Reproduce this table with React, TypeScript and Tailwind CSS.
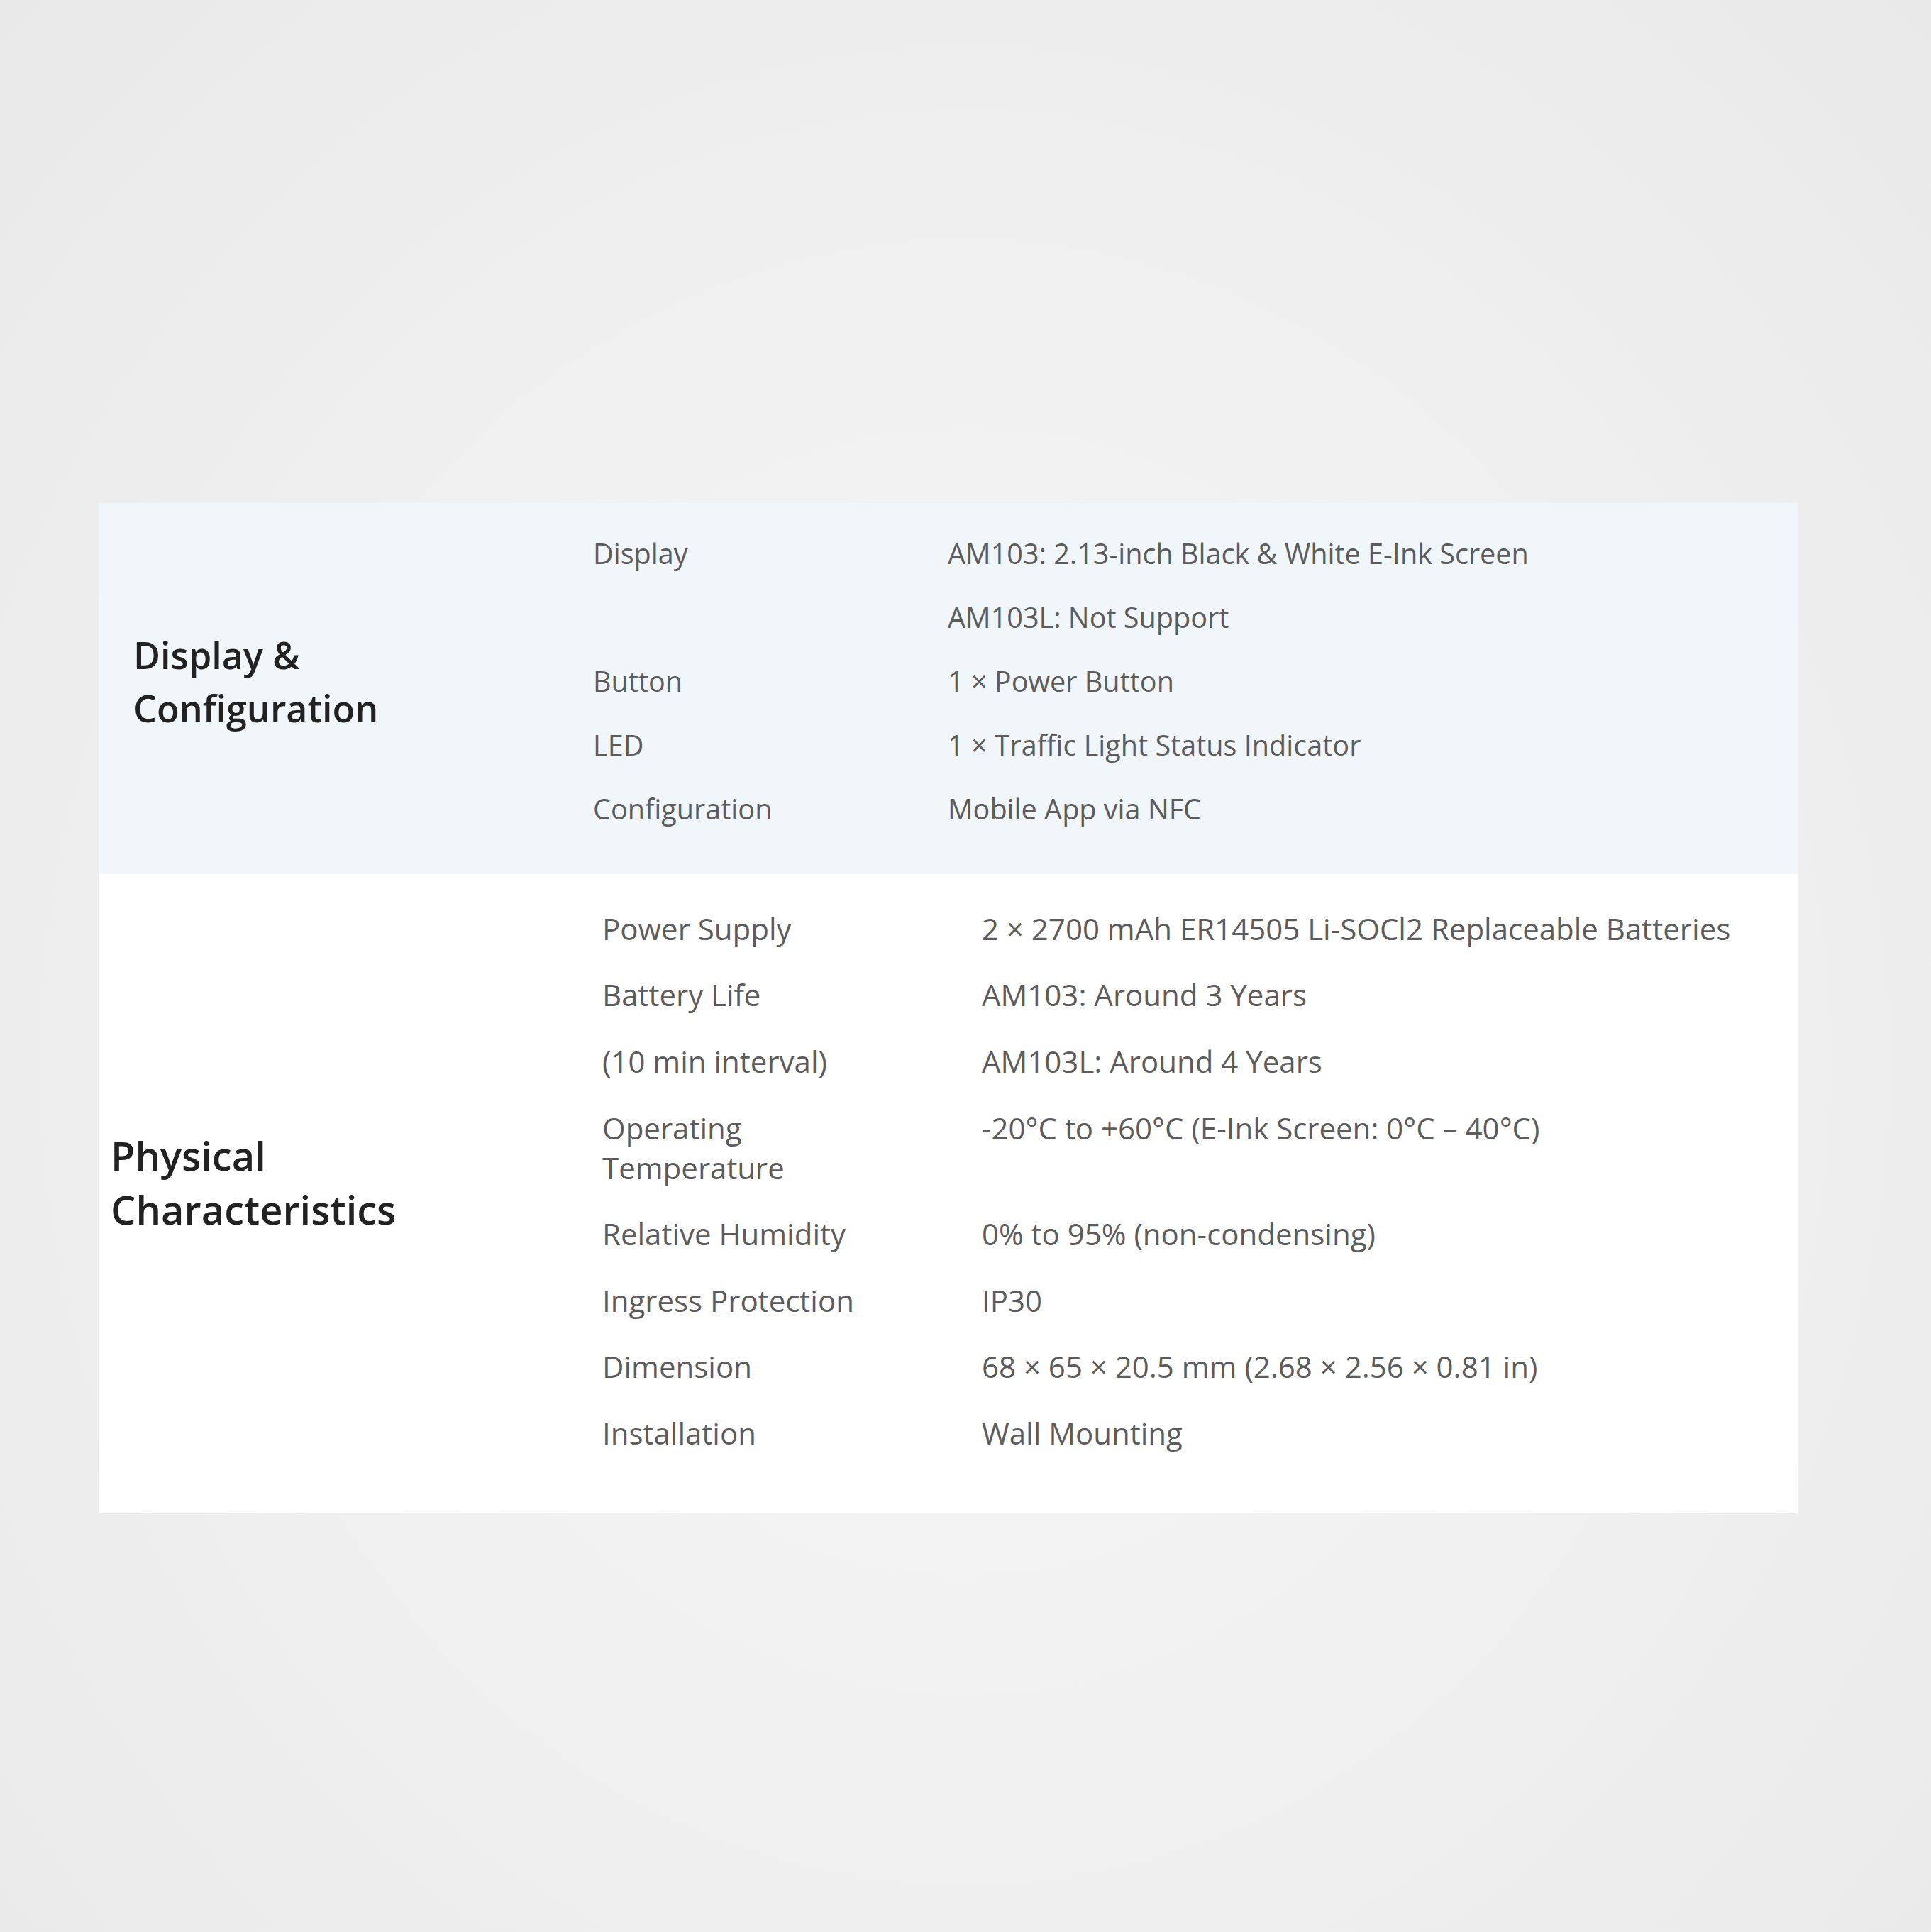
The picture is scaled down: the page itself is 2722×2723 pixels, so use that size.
const displayRows = [
  { label: 'Display', value: 'AM103: 2.13-inch Black & White E-Ink Screen' },
  { label: '', value: 'AM103L: Not Support' },
  { label: 'Button', value: '1 × Power Button' },
  { label: 'LED', value: '1 × Traffic Light Status Indicator' },
  { label: 'Configuration', value: 'Mobile App via NFC' },
];

const physicalRows = [
  { label: 'Power Supply', value: '2 × 2700 mAh ER14505 Li-SOCl2 Replaceable Batteries' },
  { label: 'Battery Life', value: 'AM103: Around 3 Years' },
  { label: '(10 min interval)', value: 'AM103L: Around 4 Years' },
  { label: 'Operating Temperature', value: '-20°C to +60°C (E-Ink Screen: 0°C – 40°C)' },
  { label: 'Relative Humidity', value: '0% to 95% (non-condensing)' },
  { label: 'Ingress Protection', value: 'IP30' },
  { label: 'Dimension', value: '68 × 65 × 20.5 mm (2.68 × 2.56 × 0.81 in)' },
  { label: 'Installation', value: 'Wall Mounting' },
];

export default function App() {
  return (
    <div
      className="w-[2722px] h-[2723px] pt-[709px] pl-[139px] bg-[radial-gradient(ellipse_at_50%_55%,#f8f8f8_0%,#f1f1f1_45%,#e9e9ea_100%)]"
      style={{ fontFamily: '"Open Sans", "Noto Sans", sans-serif' }}
    >
      <div className="w-[2395px]">
        {/* Display & Configuration */}
        <section className="flex h-[523px] bg-[#f1f6fa] pt-[26px] pb-[48px]">
          <div className="w-[697px] pl-[49px] flex items-center">
            <h2 className="text-[52px] leading-[75px] font-semibold text-[#222222]">
              Display &amp;
              <br />
              Configuration
            </h2>
          </div>
          <div className="flex-1 flex flex-col">
            {displayRows.map((row, i) => (
              <div key={i} className="flex py-[17px] text-[39.6px] leading-[56px] text-[#5c5c5c]">
                <div className="w-[500px] shrink-0">{row.label}</div>
                <div>{row.value}</div>
              </div>
            ))}
          </div>
        </section>

        {/* Physical Characteristics */}
        <section className="flex h-[901px] bg-white pt-[30px] pb-[62px]">
          <div className="w-[710px] pl-[17px] flex items-center">
            <h2 className="text-[56px] leading-[76px] font-semibold text-[#222222] -mt-[2px]">
              Physical
              <br />
              Characteristics
            </h2>
          </div>
          <div className="flex-1 flex flex-col">
            {physicalRows.map((row) => (
              <div key={row.label} className="flex py-[18.8px] text-[42px] leading-[56px] text-[#5c5c5c]">
                <div className="w-[535px] shrink-0 pr-[120px]">{row.label}</div>
                <div>{row.value}</div>
              </div>
            ))}
          </div>
        </section>
      </div>
    </div>
  );
}
